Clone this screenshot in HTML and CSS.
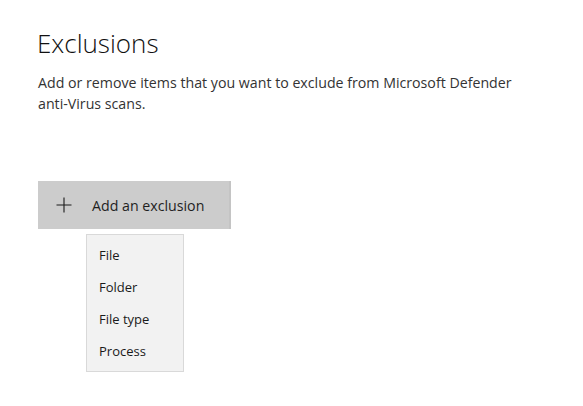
FILE: index.html
```html
<!DOCTYPE html>
<html>
<head>
<meta charset="utf-8">
<link rel="stylesheet" href="styles.css">
</head>
<body>
<main class="page">
  <h1 class="title">Exclusions</h1>
  <p class="desc">Add or remove items that you want to exclude from Microsoft Defender anti-Virus scans.</p>
  <div class="add-wrap">
    <button class="add-btn" type="button">
      <svg class="plus" width="16" height="16" viewBox="0 0 16 16"><path d="M8 0.5V15.5M0.5 8H15.5" stroke="#1a1a1a" stroke-width="1.1" fill="none"/></svg>
      <span>Add an exclusion</span>
    </button>
    <ul class="menu">
      <li>File</li>
      <li>Folder</li>
      <li>File type</li>
      <li>Process</li>
    </ul>
  </div>
</main>
</body>
</html>
```
FILE: styles.css
```css
html, body {
  margin: 0;
  padding: 0;
  background: #ffffff;
}
body {
  font-family: "Open Sans", "Noto Sans", sans-serif;
  color: #1f1f1f;
  width: 583px;
  height: 406px;
  overflow: hidden;
}
.page {
  padding: 24px 0 0 38px;
}
.title {
  margin: 0 0 0 -1px;
  font-weight: 300;
  font-size: 26px;
  line-height: 38px;
  color: #111;
}
.desc {
  margin: 10px 0 0 0;
  width: 485px;
  font-size: 14.2px;
  line-height: 21px;
  color: #333;
}
.add-wrap {
  margin-top: 67px;
  display: flex;
  flex-direction: column;
  align-items: flex-start;
}
.add-btn {
  width: 193px;
  height: 48px;
  background: #cccccc;
  border: none;
  border-right: 2px solid #c4c4c4;
  padding: 0 0 0 18px;
  display: flex;
  align-items: center;
  gap: 20px;
  font-family: inherit;
  font-size: 14.2px;
  color: #1f1f1f;
}
.plus {
  flex: none;
}
.menu {
  list-style: none;
  margin: 5px 0 0 48px;
  padding: 4px 0 4px 0;
  width: 96px;
  background: #f2f2f2;
  border: 1px solid #d9d9d9;
  font-size: 13px;
}
.menu li {
  height: 32px;
  line-height: 32px;
  padding-left: 12px;
  color: #1a1a1a;
}
```
